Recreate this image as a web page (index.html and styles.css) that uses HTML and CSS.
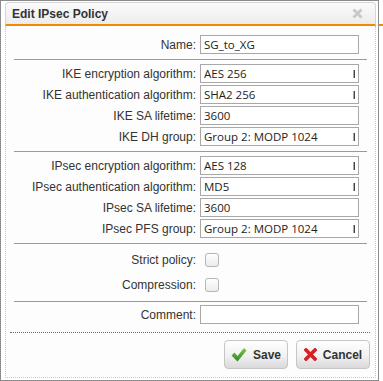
FILE: index.html
```html
<!DOCTYPE html>
<html lang="en">
  <head>
    <meta charset="UTF-8" />
    <meta name="viewport" content="width=device-width, initial-scale=1.0" />
    <title>Edit IPsec Policy</title>
    <link rel="stylesheet" href="styles.css">
  </head>
  <body>
    <div class="frame">
      <div class="dialog">
        <div class="dialog-title">
          <span>Edit IPsec Policy</span>
          <svg class="close" width="11" height="11" viewBox="0 0 11 11">
            <path d="M1.5 1.5 L9.5 9.5 M9.5 1.5 L1.5 9.5" stroke="#c9c9c9" stroke-width="3" />
          </svg>
        </div>
        <div class="dialog-body">
          <form class="policy-form">
            <div class="section">
              <div class="row">
                <label>Name:</label>
                <input class="field" type="text" value="SG_to_XG">
              </div>
            </div>
            <div class="section">
              <div class="row">
                <label>IKE encryption algorithm:</label>
                <select class="field"><option>AES 256</option></select>
              </div>
              <div class="row">
                <label>IKE authentication algorithm:</label>
                <select class="field"><option>SHA2 256</option></select>
              </div>
              <div class="row">
                <label>IKE SA lifetime:</label>
                <input class="field" type="text" value="3600">
              </div>
              <div class="row">
                <label>IKE DH group:</label>
                <select class="field"><option>Group 2: MODP 1024</option></select>
              </div>
            </div>
            <div class="section">
              <div class="row">
                <label>IPsec encryption algorithm:</label>
                <select class="field"><option>AES 128</option></select>
              </div>
              <div class="row">
                <label>IPsec authentication algorithm:</label>
                <select class="field"><option>MD5</option></select>
              </div>
              <div class="row">
                <label>IPsec SA lifetime:</label>
                <input class="field" type="text" value="3600">
              </div>
              <div class="row">
                <label>IPsec PFS group:</label>
                <select class="field"><option>Group 2: MODP 1024</option></select>
              </div>
            </div>
            <div class="section">
              <div class="row row-check">
                <label>Strict policy:</label>
                <input class="check" type="checkbox">
              </div>
              <div class="row row-check">
                <label>Compression:</label>
                <input class="check" type="checkbox">
              </div>
            </div>
            <div class="section section-last">
              <div class="row">
                <label>Comment:</label>
                <input class="field" type="text" value="">
              </div>
            </div>
          </form>
          <div class="buttons">
            <button class="btn btn-save" type="button">
              <svg width="16" height="16" viewBox="0 0 16 16">
                <defs>
                  <linearGradient id="ok" x1="0" y1="0" x2="0" y2="1">
                    <stop offset="0" stop-color="#7cc750" />
                    <stop offset="1" stop-color="#2e8a1c" />
                  </linearGradient>
                </defs>
                <path d="M0.5 8.5 L3.5 5.5 L6.5 9 L13 1 L15.5 3.5 L6.5 14.5 Z" fill="url(#ok)" />
              </svg>
              Save
            </button>
            <button class="btn btn-cancel" type="button">
              <svg width="13" height="13" viewBox="0 0 13 13">
                <path d="M2 2 L11 11 M11 2 L2 11" stroke="#d42222" stroke-width="3.6" stroke-linecap="square" />
              </svg>
              Cancel
            </button>
          </div>
        </div>
      </div>
    </div>
  </body>
</html>
```

FILE: styles.css
```css
* {
  box-sizing: border-box;
}

body {
  margin: 0;
  background: linear-gradient(#fff 24px, #f08a00 24px, #f08a00 26px, #fff 26px);
  font-family: "Liberation Sans", Arial, sans-serif;
  font-size: 12px;
  color: #333;
}

.frame {
  width: 379px;
  height: 381px;
  border: 1px solid #8c8c8c;
  background: #fff;
  padding: 1px 2px 2px 4px;
}

.dialog {
  display: flex;
  flex-direction: column;
  height: 100%;
}

.dialog-title {
  display: flex;
  justify-content: space-between;
  align-items: center;
  height: 24px;
  padding: 0 12px 0 6px;
  border: 1px solid #d6d6d6;
  border-bottom: 2px solid #f08a00;
  border-radius: 4px 4px 0 0;
  background: linear-gradient(#fbfbfb, #ececec);
  font-weight: bold;
  color: #333;
}

.dialog-body {
  flex: 1;
  border: 1px dotted #c8c8c8;
  border-top: none;
  background: #fdfdfd;
}

.policy-form {
  padding: 5px 8px 0;
}

.section {
  padding: 3px 0 4px;
  border-bottom: 1px solid #9a9a9a;
}

.section-last {
  padding: 2px 0 0;
  border-bottom: none;
}

.row {
  display: grid;
  grid-template-columns: 182px 159px;
  column-gap: 4px;
  align-items: center;
  height: 21px;
}

.row-check {
  height: 25px;
}

.row label {
  text-align: right;
  white-space: nowrap;
}

.field {
  appearance: none;
  height: 19px;
  margin: 0;
  padding: 0 3px;
  border: 1px solid #a8a8a8;
  border-radius: 0;
  background: #fff;
  font-family: "Open Sans", "DejaVu Sans", sans-serif;
  font-size: 11.5px;
  color: #222;
  outline: none;
}

select.field {
  background: linear-gradient(to right, #aaa 1px, #444 1px) no-repeat right 3px center / 2px 8px, #fff;
}

.check {
  appearance: none;
  width: 14px;
  height: 14px;
  margin: 0 0 0 5px;
  border: 1px solid #b6b6b6;
  border-radius: 3px;
  background: linear-gradient(#fff, #ececec);
}

.buttons {
  display: flex;
  justify-content: flex-end;
  gap: 8px;
  margin: 7px 5px 0 4px;
  padding-top: 7px;
  border-top: 1px dotted #666;
}

.btn {
  display: flex;
  justify-content: center;
  align-items: center;
  gap: 6px;
  height: 29px;
  padding: 0;
  border: 1px solid #c6c6c6;
  border-radius: 4px;
  background: linear-gradient(#ffffff, #f1f1f1 55%, #d9d9d9);
  font-family: "Liberation Sans", Arial, sans-serif;
  font-size: 12px;
  font-weight: bold;
  color: #333;
}

.btn-save {
  width: 64px;
}

.btn-cancel {
  width: 74px;
}
```
